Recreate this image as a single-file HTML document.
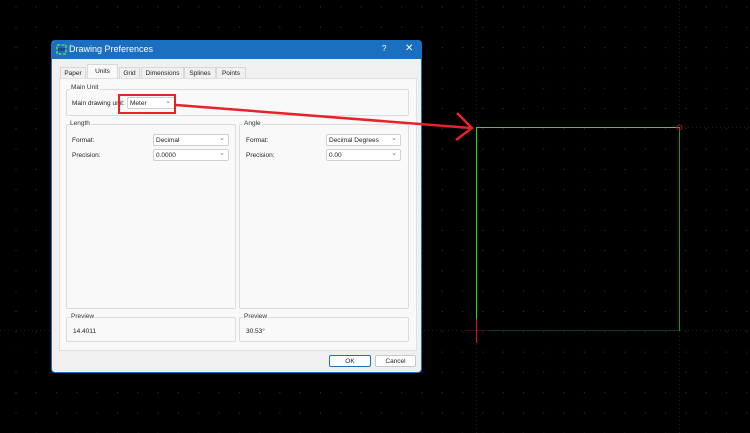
<!DOCTYPE html>
<html><head><meta charset="utf-8"><style>
*{margin:0;padding:0;box-sizing:border-box}
body{width:750px;height:433px;background:#000;position:relative;overflow:hidden;font-family:"Liberation Sans",sans-serif;font-size:7px;color:#222}
.a{position:absolute}
.dlg{left:51px;top:40px;width:371px;height:333px;background:#f0f0f0;border-radius:4px;overflow:hidden;border:1px solid #1a6fc0}
.tb{left:0;top:0;width:100%;height:18px;background:#1a6fc0;color:#fff;font-size:9px}
.tab{top:26px;height:11px;border:1px solid #d8d8d8;border-bottom:none;font-size:6.5px;text-align:center;line-height:11px;background:#f0f0f0}
.panel{left:7px;top:37px;width:358px;height:273px;background:#f9f9f9;border:1px solid #e0e0e0}
.grp{border:1px solid #dcdcdc;border-radius:2px}
.gl{font-size:6.5px;background:#f9f9f9;padding:0 1px;color:#333}
.cb{height:12px;background:#fff;border:1px solid #d0d0d0;border-radius:2px;font-size:6.5px;line-height:11px;padding-left:2px}
.cb:after{content:"⌄";position:absolute;right:3px;top:-2px;color:#777;font-size:7px}
.btn{top:314px;height:12px;background:#fff;border:1px solid #c8c8c8;border-radius:2px;text-align:center;font-size:6.5px;line-height:11px}
</style></head><body>
<svg class="a" style="left:0;top:0" width="750" height="433" shape-rendering="crispEdges">
<defs><pattern id="p" x="15.5" y="6.5" width="20.3" height="20.3" patternUnits="userSpaceOnUse"><rect x="0" y="0" width="1" height="1" fill="#3a3a3a"/></pattern></defs>
<rect width="750" height="433" fill="url(#p)"/>
<line x1="476.5" y1="0" x2="476.5" y2="433" stroke="#1c1c1c" stroke-dasharray="1 3"/>
<line x1="679.5" y1="0" x2="679.5" y2="433" stroke="#1c1c1c" stroke-dasharray="1 3"/>
<line x1="0" y1="330.5" x2="750" y2="330.5" stroke="#1c1c1c" stroke-dasharray="1 3"/>
<line x1="680" y1="127.5" x2="750" y2="127.5" stroke="#1c1c1c" stroke-dasharray="1 3"/>
<rect x="476" y="127" width="203" height="1" fill="#22dd22"/>
<rect x="476" y="127" width="1" height="193" fill="#22dd22"/>
<rect x="679" y="127" width="1" height="204" fill="#1a9a1a"/>
<rect x="488" y="330" width="191" height="1" fill="#0f3a0f"/>
<rect x="464" y="330" width="24" height="1" fill="#3a0a0a"/>
<rect x="476" y="319" width="1" height="24" fill="#dd1111"/>
<circle cx="679.5" cy="127.5" r="2.5" fill="none" stroke="#aa1111" shape-rendering="auto"/>
</svg>
<div class="a dlg">
 <div class="a tb"><svg class="a" style="left:4px;top:3px" width="11" height="11"><rect x="1" y="1" width="9" height="9" fill="none" stroke="#6c6" stroke-width="1.5" stroke-dasharray="3 1.5"/><rect x="2" y="4" width="7" height="3" fill="#1a4a8a"/></svg><span class="a" style="left:17px;top:3px">Drawing Preferences</span><span class="a" style="left:330px;top:3px;font-size:8px">?</span><span class="a" style="left:353px;top:2px;font-size:10px">✕</span></div>
 <div class="a tab" style="left:8px;width:26px">Paper</div>
 <div class="a tab" style="left:35px;width:31px;top:23px;height:15px;background:#f9f9f9;line-height:14px">Units</div>
 <div class="a tab" style="left:67px;width:21px">Grid</div>
 <div class="a tab" style="left:89px;width:43px">Dimensions</div>
 <div class="a tab" style="left:132px;width:32px">Splines</div>
 <div class="a tab" style="left:164px;width:30px">Points</div>
 <div class="a panel"></div>
 <div class="a grp" style="left:14px;top:48px;width:343px;height:27px"></div>
 <span class="a gl" style="left:18px;top:43px">Main Unit</span>
 <span class="a" style="left:20px;top:59px;font-size:6.5px">Main drawing unit:</span>
 <div class="a cb" style="left:75px;top:56px;width:48px">Meter</div>
 <div class="a" style="left:66px;top:53px;width:58px;height:20px;border:2px solid #e8222a"></div>
 <div class="a grp" style="left:14px;top:83px;width:170px;height:185px"></div>
 <span class="a gl" style="left:17px;top:79px">Length</span>
 <div class="a grp" style="left:187px;top:83px;width:170px;height:185px"></div>
 <span class="a gl" style="left:191px;top:79px">Angle</span>
 <span class="a" style="left:20px;top:96px;font-size:6.5px">Format:</span>
 <span class="a" style="left:20px;top:111px;font-size:6.5px">Precision:</span>
 <div class="a cb" style="left:101px;top:93px;width:76px">Decimal</div>
 <div class="a cb" style="left:101px;top:108px;width:76px">0.0000</div>
 <span class="a" style="left:194px;top:96px;font-size:6.5px">Format:</span>
 <span class="a" style="left:194px;top:111px;font-size:6.5px">Precision:</span>
 <div class="a cb" style="left:274px;top:93px;width:75px">Decimal Degrees</div>
 <div class="a cb" style="left:274px;top:108px;width:75px">0.00</div>
 <div class="a grp" style="left:14px;top:276px;width:170px;height:25px"></div>
 <span class="a gl" style="left:18px;top:272px">Preview</span>
 <span class="a" style="left:21px;top:287px;font-size:6.5px">14.4011</span>
 <div class="a grp" style="left:187px;top:276px;width:170px;height:25px"></div>
 <span class="a gl" style="left:191px;top:272px">Preview</span>
 <span class="a" style="left:194px;top:287px;font-size:6.5px">30.53°</span>
 <div class="a btn" style="left:277px;width:42px;border-color:#1a6fc0">OK</div>
 <div class="a btn" style="left:323px;width:41px">Cancel</div>
</div>
<svg class="a" style="left:0;top:0" width="750" height="433">
<line x1="176" y1="105" x2="471" y2="128" stroke="#e8222a" stroke-width="2.5"/>
<polyline points="457,113 472,128 456,140" fill="none" stroke="#e8222a" stroke-width="2.5"/>
</svg>
</body></html>
